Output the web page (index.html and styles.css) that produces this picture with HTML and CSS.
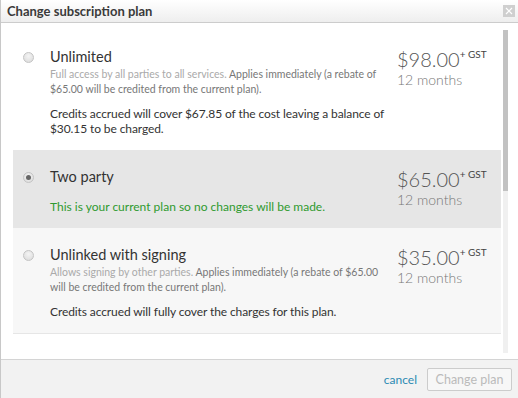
FILE: index.html
```html
<!DOCTYPE html>
<html lang="en">
<head>
    <meta charset="UTF-8">
    <meta name="viewport" content="width=device-width, initial-scale=1.0">
    <title>Change subscription plan</title>
    <link rel="stylesheet" href="styles.css">
</head>
<body>
    <div class="dialog">
        <div class="dialog-header">
            <span class="dialog-title">Change subscription plan</span>
            <span class="close-btn">
                <svg width="12" height="12" viewBox="0 0 12 12">
                    <rect width="12" height="12" fill="#cfcfcf"/>
                    <path d="M3 3 L9 9 M9 3 L3 9" stroke="#fff" stroke-width="1.2"/>
                </svg>
            </span>
        </div>

        <div class="dialog-body">
            <div class="plan-list">
                <div class="plan">
                    <span class="radio"></span>
                    <div class="plan-info">
                        <div class="plan-name">Unlimited</div>
                        <p class="plan-desc"><span class="muted">Full access by all parties to all services.</span> <span>Applies immediately (a rebate of $65.00 will be credited from the current plan).</span></p>
                        <p class="plan-note">Credits accrued will cover $67.85 of the cost leaving a balance of $30.15 to be charged.</p>
                    </div>
                    <div class="plan-price">
                        <div class="amount">$98.00<sup>+ GST</sup></div>
                        <div class="period">12 months</div>
                    </div>
                </div>

                <div class="plan current">
                    <span class="radio checked"></span>
                    <div class="plan-info">
                        <div class="plan-name">Two party</div>
                        <p class="plan-current">This is your current plan so no changes will be made.</p>
                    </div>
                    <div class="plan-price">
                        <div class="amount">$65.00<sup>+ GST</sup></div>
                        <div class="period">12 months</div>
                    </div>
                </div>

                <div class="plan alt">
                    <span class="radio"></span>
                    <div class="plan-info">
                        <div class="plan-name">Unlinked with signing</div>
                        <p class="plan-desc"><span class="muted">Allows signing by other parties.</span> <span>Applies immediately (a rebate of $65.00 will be credited from the current plan).</span></p>
                        <p class="plan-note">Credits accrued will fully cover the charges for this plan.</p>
                    </div>
                    <div class="plan-price">
                        <div class="amount">$35.00<sup>+ GST</sup></div>
                        <div class="period">12 months</div>
                    </div>
                </div>
            </div>
            <div class="scrollbar">
                <div class="scroll-track"><div class="scroll-thumb"></div></div>
            </div>
        </div>

        <div class="dialog-footer">
            <a href="#" class="cancel-link">cancel</a>
            <button class="btn-change" disabled>Change plan</button>
        </div>
    </div>
</body>
</html>
```

FILE: styles.css
```css
body {
    margin: 0;
    font-family: 'Lato', 'Liberation Sans', sans-serif;
    color: #333;
    background: #fff;
}
.dialog {
    width: 518px;
    height: 398px;
    display: flex;
    flex-direction: column;
    border-left: 1px solid #c8c8c8;
    box-sizing: border-box;
    overflow: hidden;
}
.dialog-header {
    height: 22px;
    display: flex;
    align-items: center;
    justify-content: space-between;
    padding: 0 3px 0 6px;
    background: linear-gradient(to bottom, #ffffff, #eeeeee);
    border-bottom: 1px solid #cccccc;
    flex-shrink: 0;
}
.dialog-title {
    font-size: 13px;
    font-weight: bold;
    color: #3a3a3a;
}
.close-btn {
    display: flex;
}
.dialog-body {
    flex: 1;
    display: flex;
    overflow: hidden;
    background: #fff;
}
.plan-list {
    flex: 1;
    padding: 7px 0 0 12px;
}
.plan {
    display: flex;
    align-items: flex-start;
    padding: 17px 0 14px 10px;
    background: #fff;
}
.plan.current {
    background: #e6e6e6;
}
.plan.alt {
    background: #f7f7f7;
    border-bottom: 1px solid #e6e6e6;
}
.radio {
    width: 9px;
    height: 9px;
    margin-top: 5px;
    border-radius: 50%;
    border: 1px solid #c4c4c4;
    background: radial-gradient(circle at 50% 35%, #f4f4f4, #d9d9d9);
    flex-shrink: 0;
    position: relative;
}
.radio.checked::after {
    content: "";
    position: absolute;
    left: 2px;
    top: 2px;
    width: 5px;
    height: 5px;
    border-radius: 50%;
    background: #666;
}
.plan-info {
    flex: 1;
    margin: 0 4px 0 16px;
}
.plan-name {
    font-size: 14.5px;
    line-height: 20px;
    color: #333;
}
.plan-desc {
    margin: 0;
    font-size: 10.5px;
    line-height: 15px;
    color: #777;
}
.plan-desc .muted {
    color: #aaa;
}
.plan-note {
    margin: 9px 0 0 0;
    font-size: 12px;
    line-height: 15px;
    letter-spacing: -0.1px;
    color: #333;
}
.plan-current {
    margin: 12px 0 0 0;
    font-size: 12px;
    line-height: 15px;
    color: #2f9a2f;
}
.plan-price {
    width: 104px;
    flex-shrink: 0;
}
.amount {
    font-size: 20px;
    font-weight: 300;
    line-height: 24px;
    color: #555;
}
.amount sup {
    font-size: 10px;
    font-weight: normal;
    vertical-align: top;
    line-height: 14px;
    color: #444;
}
.period {
    font-size: 14px;
    font-weight: 300;
    line-height: 18px;
    color: #777;
}
.scrollbar {
    width: 17px;
    padding: 7px 0 6px 2px;
    box-sizing: border-box;
}
.scroll-track {
    width: 5px;
    height: 100%;
    background: #f0f0f0;
}
.scroll-thumb {
    height: 161px;
    background: #c2c2c2;
}
.dialog-footer {
    height: 38px;
    flex-shrink: 0;
    display: flex;
    align-items: center;
    justify-content: flex-end;
    gap: 10px;
    padding-right: 6px;
    background: #f2f2f2;
    border-top: 1px solid #d4d4d4;
}
.cancel-link {
    font-size: 12px;
    color: #2b8ab3;
    text-decoration: none;
}
.btn-change {
    width: 85px;
    height: 23px;
    font-family: inherit;
    font-size: 12.5px;
    color: #bbb;
    background: #f7f7f7;
    border: 1px solid #cccccc;
    border-radius: 2px;
}
```
